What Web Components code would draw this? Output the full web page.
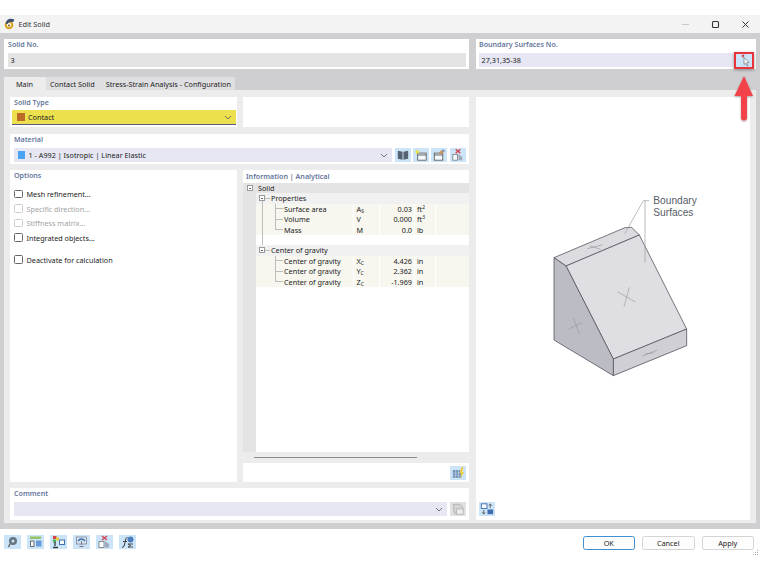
<!DOCTYPE html>
<html><head><meta charset="utf-8">
<style>
html,body{margin:0;padding:0;background:#fff;width:760px;height:570px;overflow:hidden;font:7.25px/10px "Noto Sans","Open Sans",sans-serif;color:#222}
</style></head>
<body>
<template id="t-dialog">
<style>
:host{display:flex;flex-direction:column;width:760px;height:570px;position:relative;box-sizing:border-box;padding-top:15px}
.body{height:496px;box-sizing:border-box;background:#cfcfd2;padding:6px 4.5px 6px 4px;display:flex;flex-direction:column}
.top{display:flex;gap:7px;height:30px}
.tabs{display:flex;margin-top:8px;height:13px}
.page{flex:1;background:#ececec;padding:7px 5.5px 3px 6px;display:grid;grid-template-columns:459px 1fr;column-gap:7px;min-height:0}
.left{display:flex;flex-direction:column}
.foot{height:41px;box-sizing:border-box;padding:6px 6px 0 4px;display:flex;align-items:flex-start;position:relative}
.tools{display:flex;gap:6px;flex:1;--w:17px}
.btns{display:flex;gap:7px;margin-top:1px}
.hl{position:absolute;left:733.5px;top:52px;width:16px;height:13px;border:2px solid #e8353c;box-shadow:0 1px 3px rgba(0,0,0,.35)}
.arrow{position:absolute;left:732px;top:74px}
.grip{position:absolute;right:1px;top:21px}
</style>
<title-bar></title-bar>
<div class="body">
 <div class="top"><slot name="top"></slot></div>
 <div class="tabs"><slot name="tabs"></slot></div>
 <div class="page">
  <div class="left"><slot name="left"></slot></div>
  <slot name="right"></slot>
 </div>
</div>
<div class="foot">
 <div class="tools"><slot name="tools"></slot></div>
 <div class="btns"><slot name="btns"></slot></div>
 <svg class="grip" width="6" height="6"><g fill="#aaa"><rect x="4" y="0" width="1" height="1"/><rect x="2" y="2" width="1" height="1"/><rect x="4" y="2" width="1" height="1"/><rect x="0" y="4" width="1" height="1"/><rect x="2" y="4" width="1" height="1"/><rect x="4" y="4" width="1" height="1"/></g></svg>
</div>
<div class="hl"></div>
<svg class="arrow" width="24" height="50" viewBox="0 0 24 50" style="filter:drop-shadow(0 1px 1px rgba(0,0,0,.3))"><path d="M12 2 L21 22 L15 22 L15 45 Q12 48 9 45 L9 22 L2.500 22 Z" fill="#f4424a"/></svg>
</template>

<template id="t-title">
<style>
:host{display:flex;height:18px;background:#f3f3f3;align-items:center;padding-left:4px;position:relative;font-size:7.250px;color:#333}
svg.logo{margin-right:3.500px}
.ctl{margin-left:auto;display:flex;gap:17px;padding-right:8px;align-items:center}
.ctl svg{display:block;width:13px;height:13px}
</style>
<svg class="logo" width="11" height="12" viewBox="0 0 11 12"><circle cx="5" cy="7" r="3.300" fill="none" stroke="#d9a21c" stroke-width="2"/><path d="M1.500 5.500 Q2.500 1 7 .8 L10.500 1.500 L9 4.200 Q5 3 3.500 6 Z" fill="#3c4c72"/><circle cx="5" cy="7.500" r="1" fill="#7a5a14"/></svg>
<span>Edit Solid</span>
<div class="ctl">
<svg viewBox="0 0 13 13"><path d="M3 6.500h7" stroke="#c9c9c9" stroke-width="1"/></svg>
<svg viewBox="0 0 13 13"><rect x="3.500" y="3.500" width="6" height="6" rx="1" fill="none" stroke="#333" stroke-width="1.100"/></svg>
<svg viewBox="0 0 13 13"><path d="M3.500 3.500l6 6M9.500 3.500l-6 6" stroke="#333" stroke-width="1"/></svg>
</div>
</template>

<template id="t-panel">
<style>
:host{display:block;background:#fff;box-sizing:border-box;padding:0 3.500px 0 4px;min-width:0}
.l{display:block;font-weight:600;color:#66769c;height:13px;line-height:11px;font-size:7.100px}
.c{display:flex;gap:3px;align-items:center;margin-top:1px}
</style>
<span class="l"><slot name="label"></slot></span>
<div class="c"><slot></slot></div>
</template>

<template id="t-field">
<style>
[hidden]{display:none!important}
:host{display:flex;flex:1;height:14px;align-items:center;background:#e6e7f2;padding:0 2.500px;box-sizing:border-box;min-width:0;position:relative;font-size:7.250px;color:#222}
:host([disabled]){background:#e4e4e4}
:host([yellow]){background:#ece04f;height:15px;margin:-1px -2px 0;padding-left:4px;border-bottom:1px solid #5a5a85;flex:1}
i{display:block;width:7.500px;height:7.500px;margin:0 3.500px 0 1px;flex:none}
svg{margin-left:auto;flex:none;margin-right:1.500px}
</style>
<i id="sw" hidden></i><span><slot></slot></span>
<svg id="ch" style="display:none" width="8" height="5" viewBox="0 0 8 5"><path d="M1 1l3 3 3-3" fill="none" stroke="#666" stroke-width=".9"/></svg>
</template>

<template id="t-check">
<style>
:host{display:flex;align-items:center;height:10px;font-size:7.250px;color:#222}
i{box-sizing:border-box;width:8.500px;height:8.500px;border:1px solid #666;border-radius:1.500px;margin-right:4px;flex:none;background:#fff}
:host([off]){color:#a3a3a3}
:host([off]) i{border-color:#ccc}
</style>
<i></i><span><slot></slot></span>
</template>

<template id="t-tab">
<style>
:host{display:flex;align-items:center;height:13px;background:#dfdfe1;font-size:7.250px;color:#222;padding:0 5px 0 4px;box-sizing:border-box}
:host([active]){background:#ececec;padding:0 13px 0 12px;width:42px}
:host([last]){padding:0 4px 0 6px}
</style><slot></slot>
</template>

<template id="t-row">
<style>
:host{display:grid;grid-template-columns:12.500px 97.500px 25.500px 35.500px 21px 1fr;height:10.400px;font-size:7.250px;line-height:10.400px;color:#222;background:#fff}
:host([k=leaf]){background:#f7f7f0}
:host([k=group]){background:#f1f1f1}
:host([k=root]){background:#e4e4e4}
div{min-width:0;white-space:nowrap;box-sizing:border-box}
.g{background:#e4e4e4}
.n{background-repeat:no-repeat;position:relative}
.s,.v,.u,.e{border-left:1px solid #fff}
:host(:not([k=leaf])) .s,:host(:not([k=leaf])) .v,:host(:not([k=leaf])) .u,:host(:not([k=leaf])) .e{border-left:0}
.s{padding-left:2.500px}
.v{text-align:right;padding-right:2px}
.u{padding-left:2px}
sub{font-size:5px;line-height:0;vertical-align:-1px}
sup{font-size:5px;line-height:0;vertical-align:3px}
b{position:absolute;box-sizing:border-box;width:6px;height:6px;border:1px solid #999;background:#fff}
b::after{content:"";position:absolute;left:1px;right:1px;top:1.500px;height:1px;background:#666}
</style>
<div class="g"></div><div class="n"></div><div class="s"></div><div class="v"></div><div class="u"></div><div class="e"></div>
</template>

<template id="t-figure">
<style>
:host{display:block;background:#fff;height:100%;position:relative;box-sizing:border-box}
.stage{height:405px;padding:83px 0 0 54px;box-sizing:border-box}
svg.fig{width:180px;height:200px;display:block;overflow:visible}
.b{margin:0 0 0 3px}
text{font:30.500px "Liberation Sans",Arial,sans-serif;fill:#555c66}
</style>
<div class="stage">
<svg class="fig" viewBox="0 0 540 600">
 <g stroke="#55555f" stroke-width="2.400" stroke-linejoin="round">
 <path d="M72 233L285 143L305 142L328 165L108 258Z" fill="#dcdce0"/>
 <path d="M108 258L328 165L470 447L250 537Z" fill="#dfdfe3"/>
 <path d="M250 537L470 447L470 497L250 587Z" fill="#cfcfd5"/>
 <path d="M72 233L108 258L250 537L250 587L72 480Z" fill="#bcbcc4"/>
 </g>
 <g stroke="#98989f" stroke-width="2" fill="none">
 <path d="M345 248V62H358M285 160L340 62H345"/>
 <path d="M262 335L316 366M298 322L282 380"/>
 <path d="M118 446L156 428M130 414L148 462"/>
 <path d="M172 206L218 194M180 198L212 208"/>
 <path d="M336 529L382 510M345 522L372 518"/>
 </g>
 <text x="370" y="73">Boundary</text>
 <text x="370" y="107">Surfaces</text>
</svg>
</div>
<div class="b"><slot></slot></div>
</template>

<template id="t-push">
<style>
:host{display:flex;width:52.500px;height:14px;box-sizing:border-box;align-items:center;justify-content:center;border:1px solid #d4d4d4;border-radius:2.500px;background:#fdfdfd;font-size:7.250px;color:#222}
:host([def]){border-color:#3f8fd2}
</style><slot></slot>
</template>

<edit-dialog>
 <x-panel slot="top" style="width:465px"><span slot="label">Solid No.</span><x-field disabled>3</x-field></x-panel>
 <x-panel slot="top" style="flex:1;padding:0 3px"><span slot="label">Boundary Surfaces No.</span><x-field style="margin-right:-3px">27,31,35-38</x-field>
   <x-ibtn style="--w:17px"><svg xmlns="http://www.w3.org/2000/svg" viewBox="0 0 17 14"><path d="M6 2l2 2M8 2L6 4" stroke="#c8303a" stroke-width="1.200"/><path d="M8 4.500l5 5-2.200.2 1.300 2.600-1.300.6-1.200-2.700L8 11.500Z" fill="#fff" stroke="#666" stroke-width=".7"/></svg></x-ibtn></x-panel>

 <x-tab slot="tabs" active>Main</x-tab>
 <x-tab slot="tabs">Contact Solid</x-tab>
 <x-tab slot="tabs" last>Stress-Strain Analysis - Configuration</x-tab>

 <div slot="left" style="display:grid;grid-template-columns:227px 226px;column-gap:6px;height:30px">
  <x-panel><span slot="label">Solid Type</span><x-field yellow swatch="#bb6a28" chevron>Contact</x-field></x-panel>
  <x-panel></x-panel>
 </div>
 <x-panel slot="left" style="height:30px;margin-top:7px"><span slot="label">Material</span>
  <x-field swatch="#4ba3f5" chevron>1 - A992 | Isotropic | Linear Elastic</x-field>
  <div style="display:flex;gap:2.170px;flex:none">
  <x-ibtn><svg xmlns="http://www.w3.org/2000/svg" viewBox="0 0 17 14"><path d="M3 2.500l5 1v8.500l-5-1ZM14 2.500l-5 1v8.500l5-1Z" fill="#46505f"/></svg></x-ibtn>
  <x-ibtn><svg xmlns="http://www.w3.org/2000/svg" viewBox="0 0 17 14"><rect x="5" y="5" width="9" height="7.500" fill="#fff" stroke="#444" stroke-width=".9"/><path d="M5 7h9" stroke="#444"/><path d="M4.500 1l.9 1.700 1.900.2-1.400 1.300.4 1.900-1.800-.9-1.700.9.400-1.900L1.800 2.900l1.900-.2Z" fill="#f2df2e"/></svg></x-ibtn>
  <x-ibtn><svg xmlns="http://www.w3.org/2000/svg" viewBox="0 0 17 14"><rect x="3.500" y="5" width="9" height="7.500" fill="#fff" stroke="#444" stroke-width=".9"/><path d="M3.500 7h9" stroke="#444"/><path d="M8 5l3-3 3 1-2 3Z" fill="#c98a4a"/><path d="M12 1.500l2.500 1.500" stroke="#3a7bd0" stroke-width="1.200"/></svg></x-ibtn>
  <x-ibtn><svg xmlns="http://www.w3.org/2000/svg" viewBox="0 0 17 14"><path d="M6 1l5 4M11 1L6 5" stroke="#d2303a" stroke-width="1.400"/><rect x="3" y="6.500" width="5" height="6" fill="#fff" stroke="#666" stroke-width=".8"/><path d="M9 6l4 3v3.500H9Z" fill="#9aa3b5"/></svg></x-ibtn>
  </div>
 </x-panel>

 <div slot="left" style="display:grid;grid-template-columns:227px 226px;column-gap:6px;height:312px;margin:6px 0">
  <x-panel><span slot="label">Options</span>
   <div style="display:flex;flex-direction:column;padding-top:5px;width:100%">
    <x-check>Mesh refinement...</x-check>
    <x-check off style="margin-top:4.500px">Specific direction...</x-check>
    <x-check off style="margin-top:4.500px">Stiffness matrix...</x-check>
    <x-check style="margin-top:4.500px">Integrated objects...</x-check>
    <x-check style="margin-top:12px">Deactivate for calculation</x-check>
   </div>
  </x-panel>
  <div style="display:flex;flex-direction:column;min-width:0">
   <x-infohead>Information | Analytical</x-infohead>
   <div style="flex:none;height:269px;background:#fff;display:flex;flex-direction:column">
    <x-row k="root" label="Solid"></x-row>
    <x-row k="group" label="Properties" vl="1"></x-row>
    <x-row k="leaf" label="Surface area" sym="A" sub="S" val="0.03" unit="ft" sup="2" lines="mid"></x-row>
    <x-row k="leaf" label="Volume" sym="V" val="0.000" unit="ft" sup="3" lines="mid"></x-row>
    <x-row k="leaf" label="Mass" sym="M" val="0.0" unit="lb" lines="end"></x-row>
    <x-row k="blank" label="" vl="1"></x-row>
    <x-row k="group" label="Center of gravity"></x-row>
    <x-row k="leaf" label="Center of gravity" sym="X" sub="C" val="4.426" unit="in" lines="mid"></x-row>
    <x-row k="leaf" label="Center of gravity" sym="Y" sub="C" val="2.362" unit="in" lines="mid"></x-row>
    <x-row k="leaf" label="Center of gravity" sym="Z" sub="C" val="-1.969" unit="in" lines="end"></x-row>
    <div style="flex:1;display:flex"><div style="width:12.500px;background:#e4e4e4"></div></div>
   </div>
   <div style="height:11px;background:#ececec;display:flex;align-items:center;padding-left:11px;flex:none"><div style="width:163px;height:1px;background:#8a8a8a"></div></div>
   <div style="flex:1;background:#fff;display:flex;justify-content:flex-end;align-items:center;padding-right:3.500px">
    <x-ibtn><svg xmlns="http://www.w3.org/2000/svg" viewBox="0 0 17 14"><rect x="3" y="4" width="9" height="8" fill="#5f7fa8"/><path d="M6 4v8M9 4v8M3 7h9M3 9.500h9" stroke="#cfe0f0" stroke-width=".6"/><path d="M12 1l-2 6h2l-1 6 4-7h-2l1.500-5Z" fill="#f3c92c"/></svg></x-ibtn>
   </div>
  </div>
 </div>

 <x-panel slot="left" style="height:32px"><span slot="label">Comment</span>
  <x-field chevron></x-field>
  <x-ibtn off><svg xmlns="http://www.w3.org/2000/svg" viewBox="0 0 17 14"><path d="M3.500 2h7l3 3v7h-9Z" fill="#d2d2d2" stroke="#a8a8a8" stroke-width=".9"/><rect x="7" y="7" width="7" height="5.500" fill="#efefef" stroke="#a8a8a8" stroke-width=".8"/></svg></x-ibtn>
 </x-panel>

 <x-figure slot="right">
  <x-ibtn><svg xmlns="http://www.w3.org/2000/svg" viewBox="0 0 17 14"><rect x="2.500" y="1.500" width="6" height="5" fill="#fff" stroke="#2d5fa8"/><rect x="9" y="7.500" width="6" height="5" fill="#2d5fa8"/><path d="M5 8v4M3.500 10.500L5 12.500l1.500-2M12 6V2M10.500 3.500L12 1.500l1.500 2" stroke="#333" fill="none" stroke-width=".8"/></svg></x-ibtn>
 </x-figure>

 <x-ibtn slot="tools"><svg xmlns="http://www.w3.org/2000/svg" viewBox="0 0 17 14"><circle cx="9" cy="6" r="4" fill="#5a6672"/><path d="M6 9L4.500 12" stroke="#444" stroke-width="1.300"/><circle cx="9" cy="6" r="1.500" fill="#cce4f7"/></svg></x-ibtn>
 <x-ibtn slot="tools"><svg xmlns="http://www.w3.org/2000/svg" viewBox="0 0 17 14"><rect x="3" y="1.500" width="11" height="2.500" fill="#8cc152"/><rect x="9" y="5.500" width="5.500" height="6" fill="#5b8fd8"/><path d="M3.500 6h3.500v5.500H3.500Z" fill="#fff" stroke="#333" stroke-width=".8"/></svg></x-ibtn>
 <x-ibtn slot="tools"><svg xmlns="http://www.w3.org/2000/svg" viewBox="0 0 17 14"><rect x="3" y="1" width="3.500" height="3" fill="#d2302c"/><rect x="6" y="2.500" width="3" height="3" fill="#e8c81e"/><rect x="3" y="4.500" width="3" height="3" fill="#3fa648"/><path d="M5 7v4M3 12.500h5" stroke="#222" stroke-width="1.300"/><rect x="9.500" y="5" width="5" height="4.500" fill="#fff" stroke="#2d5fa8"/></svg></x-ibtn>
 <x-ibtn slot="tools"><svg xmlns="http://www.w3.org/2000/svg" viewBox="0 0 17 14"><rect x="3.500" y="2" width="10" height="7" fill="#dbe6f2" stroke="#778" stroke-width=".8"/><path d="M5 6q3.500-4 7 0" fill="none" stroke="#2d5fa8" stroke-width="1.500"/><path d="M8.500 6v4M6.500 11.500h4" stroke="#667"/></svg></x-ibtn>
 <x-ibtn slot="tools"><svg xmlns="http://www.w3.org/2000/svg" viewBox="0 0 17 14"><path d="M6 1l5 4M11 1L6 5" stroke="#d2303a" stroke-width="1.400"/><rect x="3" y="6.500" width="5" height="6" fill="#fff" stroke="#666" stroke-width=".8"/><path d="M9 6l4 3v3.500H9Z" fill="#9aa3b5"/></svg></x-ibtn>
 <x-ibtn slot="tools"><svg xmlns="http://www.w3.org/2000/svg" viewBox="0 0 17 14"><path d="M3 12.500q2.500 0 3-5t2.500-5.500" fill="none" stroke="#222" stroke-width="1"/><path d="M4 6.500h4" stroke="#222" stroke-width=".9"/><circle cx="11.500" cy="4.500" r="3" fill="#3d6fb8"/><path d="M9 9h5M9 12h5M9 9l2.500 1.500L9 12" fill="none" stroke="#222" stroke-width=".9"/></svg></x-ibtn>

 <x-push slot="btns" def>OK</x-push>
 <x-push slot="btns">Cancel</x-push>
 <x-push slot="btns">Apply</x-push>
</edit-dialog>

<script>
function base(id, setup){
  return class extends HTMLElement{
    constructor(){super();const r=this.attachShadow({mode:'open'});r.appendChild(document.getElementById(id).content.cloneNode(true));}
    connectedCallback(){ if(setup) setup.call(this,this.shadowRoot); }
  };
}
customElements.define('title-bar',base('t-title'));
customElements.define('edit-dialog',base('t-dialog'));
customElements.define('x-panel',base('t-panel'));
customElements.define('x-field',base('t-field',function(r){
  const s=this.getAttribute('swatch');
  if(s){const i=r.getElementById('sw');i.hidden=false;i.style.background=s;}
  if(this.hasAttribute('chevron'))r.getElementById('ch').style.display='block';
}));
customElements.define('x-ibtn',class extends HTMLElement{
  constructor(){super();const r=this.attachShadow({mode:'open'});
    r.innerHTML='<style>:host{display:block;width:var(--w,16px);height:14px;background:#cce4f7;flex:none;line-height:0}:host([off]){background:#e1e1e1}::slotted(svg){width:100%;height:100%;display:block;opacity:.88}</style><slot></slot>';}
});
customElements.define('x-check',base('t-check'));
customElements.define('x-tab',base('t-tab'));
customElements.define('x-push',base('t-push'));
customElements.define('x-figure',base('t-figure'));
customElements.define('x-infohead',class extends HTMLElement{
  constructor(){super();const r=this.attachShadow({mode:'open'});
    r.innerHTML='<style>:host{display:block;flex:none;height:13px;background:#fff;font-size:7.1px;line-height:13px;font-weight:600;color:#66769c;padding-left:3px}</style><slot></slot>';}
});
customElements.define('x-row',base('t-row',function(r){
  const a=n=>this.getAttribute(n)||'';
  const n=r.querySelector('.n'),c='#bdbdbd';
  const k=a('k');
  const pad=k==='root'?2.5:k==='group'?15.5:k==='leaf'?28.5:0;
  if(k==='root'){
    const g=r.querySelector('.g');g.style.position='relative';
    const b=document.createElement('b');b.style.left='3.5px';b.style.top='2px';g.appendChild(b);
  }
  const sp=document.createElement('span');sp.textContent=a('label');sp.style.paddingLeft=pad+'px';n.appendChild(sp);
  if(k==='group'){
    const b=document.createElement('b');b.style.left='3.5px';b.style.top='2px';n.appendChild(b);
  }
  const bg=[];
  if(k==='leaf'){
    const inProps=['Surface area','Volume','Mass'].includes(a('label'));
    const h=a('lines')==='end'?'50%':'100%';
    bg.push(`linear-gradient(${c},${c}) 19px 0/1px ${h}`);
    bg.push(`linear-gradient(${c},${c}) 19px 50%/8px 1px`);
    if(inProps)bg.push(`linear-gradient(${c},${c}) 6.5px 0/1px 100%`);
  }
  if(a('vl')){bg.push(`linear-gradient(${c},${c}) 6.5px ${k==='group'?'8px':'0'}/1px 100%`);}
  if(k==='group'){bg.push(`linear-gradient(${c},${c}) 9.5px 50%/5px 1px`);}
  n.style.background=bg.join(',');
  n.style.backgroundRepeat='no-repeat';
  r.querySelector('.s').innerHTML=a('sym')+(a('sub')?`<sub>${a('sub')}</sub>`:'');
  r.querySelector('.v').textContent=a('val');
  r.querySelector('.u').innerHTML=a('unit')+(a('sup')?`<sup>${a('sup')}</sup>`:'');
}));
</script>
</body></html>
